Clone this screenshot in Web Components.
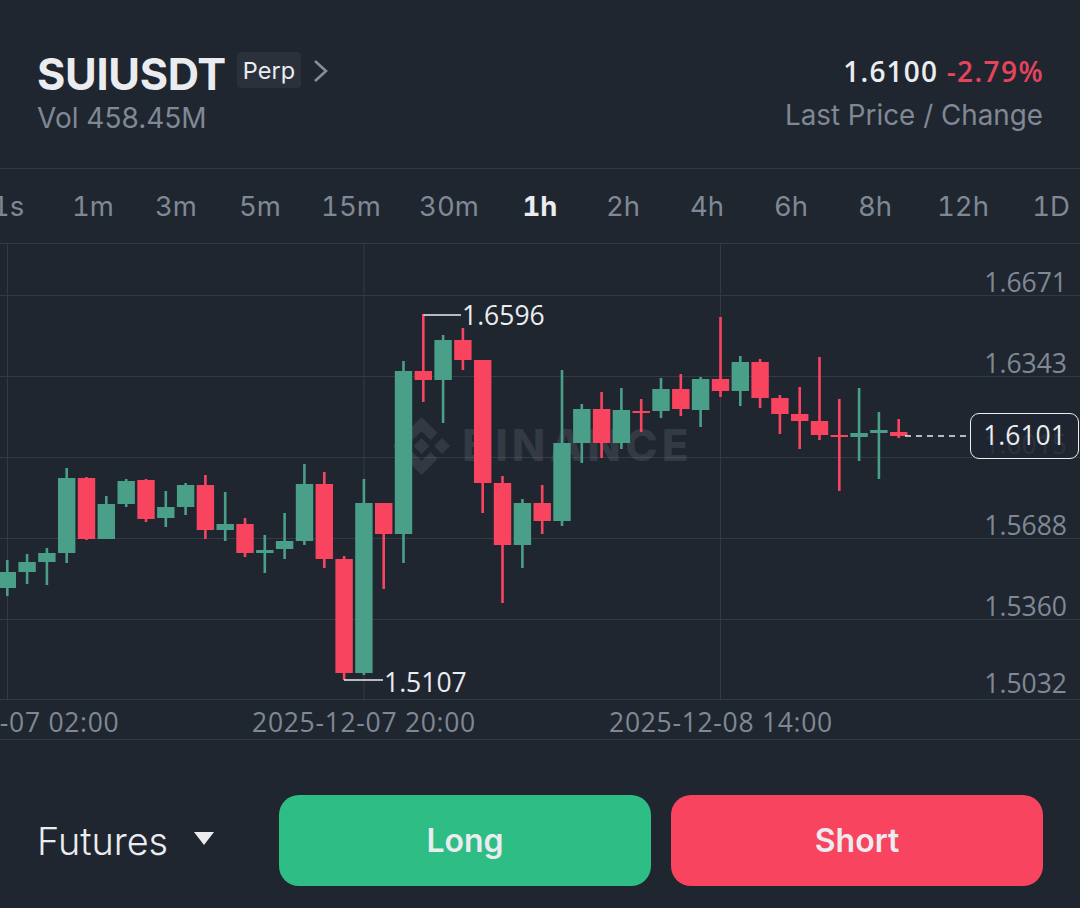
<!DOCTYPE html>
<html>
<head>
<meta charset="utf-8">
<style>
  html, body { margin: 0; background: #1f2630; }
  body { width: 1080px; height: 908px; overflow: hidden; font-family: "Inter", "Liberation Sans", sans-serif; }
</style>
</head>
<body>
<trade-screen>
  <trade-header symbol="SUIUSDT" tag="Perp" vol="Vol 458.45M" price="1.6100" change="-2.79%" caption="Last Price / Change"></trade-header>
  <interval-bar active="1h" items="1s:86,1m:84,3m:82,5m:86,15m:96,30m:100,1h:82,2h:84,4h:84,6h:84,8h:84,12h:92,1D:84"></interval-bar>
  <price-chart></price-chart>
  <action-bar>
    <trade-button kind="long">Long</trade-button>
    <trade-button kind="short">Short</trade-button>
  </action-bar>
</trade-screen>

<script>
class TradeScreen extends HTMLElement {
  constructor() {
    super();
    this.attachShadow({ mode: "open" });
    this.shadowRoot.innerHTML = `
      <style>
        :host { display: flex; flex-direction: column; width: 1080px; height: 908px; background: #1f2630; overflow: hidden; }
      </style>
      <slot></slot>
    `;
  }
}

class TradeHeader extends HTMLElement {
  connectedCallback() {
    const a = (n) => this.getAttribute(n);
    this.attachShadow({ mode: "open" });
    this.shadowRoot.innerHTML = `
      <style>
        :host { display: flex; justify-content: space-between; box-sizing: border-box; height: 169px; padding: 52px 37px 0 37px; border-bottom: 1px solid #343b46; }
        .title { display: flex; align-items: flex-start; }
        .symbol { font-size: 43.3px; font-weight: 700; line-height: 44px; letter-spacing: -0.3px; color: #eaecef; }
        .tag { margin-left: 11px; width: 64px; height: 36px; line-height: 37px; text-align: center; background: #2a313c; border-radius: 4px; font-size: 23.5px; color: #eaecef; }
        svg { margin: 8px 0 0 12px; }
        .vol { margin-top: 6px; font-size: 28px; line-height: 32px; color: #7f8894; }
        .right { text-align: right; }
        .quote { font-family: "Open Sans", sans-serif; font-size: 28px; line-height: 38px; font-weight: 600; letter-spacing: 1.2px; color: #eaecef; }
        .quote span { letter-spacing: 1.4px; margin-right: -1px; color: #e6445d; }
        .caption { margin-top: 9px; font-size: 27.8px; line-height: 32px; color: #7f8894; }
      </style>
      <div>
        <div class="title">
          <div class="symbol">${a("symbol")}</div>
          <div class="tag">${a("tag")}</div>
          <svg width="16" height="22" viewBox="0 0 16 22" fill="none" stroke="#848e9c" stroke-width="2.6"><path d="M2 1l11 10L2 21"/></svg>
        </div>
        <div class="vol">${a("vol")}</div>
      </div>
      <div class="right">
        <div class="quote">${a("price")} <span>${a("change")}</span></div>
        <div class="caption">${a("caption")}</div>
      </div>
    `;
  }
}

class IntervalBar extends HTMLElement {
  connectedCallback() {
    const active = this.getAttribute("active");
    const items = this.getAttribute("items").split(",").map((s) => s.split(":"));
    this.attachShadow({ mode: "open" });
    this.shadowRoot.innerHTML = `
      <style>
        :host { display: flex; align-items: center; box-sizing: border-box; height: 75px; margin-left: -35px; width: 1115px; border-bottom: 1px solid #343b46; font-size: 27.5px; font-variant-numeric: tabular-nums; color: #7f8894; white-space: nowrap; }
        span { flex: none; text-align: center; }
        .on { color: #eaecef; font-weight: 700; }
      </style>
      ${items.map(([t, w]) => `<span class="${t === active ? "on" : ""}" style="width:${w}px">${t}</span>`).join("")}
    `;
  }
}

// [colour, wickTop, bodyTop, bodyBottom, wickBottom] in page pixels
const CANDLES = [
  ["g",560,572,588,596],["g",554,562,572,584],["g",548,553,562,585],["g",468,478,553,563],
  ["r",477,478,539,540],["g",496,504,539,539],["g",479,481,504,507],["r",479,480,519,522],
  ["g",491,507,518,527],["g",483,485,507,515],["r",475,485,530,539],["g",492,524,530,541],
  ["r",518,524,553,557],["g",535,550,553,573],["g",513,541,549,559],["g",464,484,541,545],
  ["r",472,484,559,568],["r",556,559,673,680],["g",479,503,673,675],["r",503,503,534,589],
  ["g",361,371,534,563],["r",314,371,380,402],["g",335,340,380,423],["r",328,340,360,370],
  ["r",360,360,483,513],["r",476,483,545,603],["g",499,503,545,568],["r",485,503,521,534],
  ["g",370,443,521,526],["g",404,409,443,463],["r",392,409,443,458],["g",388,410,443,449],
  ["r",399,411,413,432],["g",378,389,411,418],["r",374,389,409,416],["g",377,379,410,427],
  ["r",317,379,391,397],["g",356,362,391,406],["r",359,362,398,408],["r",395,398,414,434],
  ["r",387,414,421,449],["r",357,421,435,440],["r",399,435,437,491],["g",388,433,437,461],
  ["g",412,430,433,479],["r",419,432,436,438],
];

class PriceChart extends HTMLElement {
  connectedCallback() {
    const colors = { g: "#4a9f88", r: "#f9445f" };
    const candles = CANDLES.map(([c, wt, bt, bb, wb], i) => {
      const x = 7.3 + 19.81 * i;
      return `<rect x="${(x - 1.3).toFixed(1)}" y="${wt}" width="2.6" height="${wb - wt}" fill="${colors[c]}"/>` +
        `<rect x="${(x - 8.7).toFixed(1)}" y="${bt}" width="17.4" height="${bb - bt}" fill="${colors[c]}"/>`;
    }).join("");
    const hLines = [295, 376, 457, 538, 619, 699].map((y) => `<path d="M0 ${y + .5}H1080"/>`).join("");
    const vLines = [7.5, 364, 720.5].map((x) => `<path d="M${x} 244V699"/>`).join("");
    const axis = [["1.6671", 282], ["1.6343", 363], ["1.6015", 444], ["1.5688", 525], ["1.5360", 606], ["1.5032", 683]];
    const times = [["2025-12-07 02:00", 7.5], ["2025-12-07 20:00", 364], ["2025-12-08 14:00", 721]];
    this.attachShadow({ mode: "open" });
    this.shadowRoot.innerHTML = `
      <style>
        :host { display: block; position: relative; flex: none; box-sizing: border-box; height: 496px; width: 1080px; border-bottom: 1px solid #343b46; font-family: "Open Sans", sans-serif; font-size: 26.5px; overflow: hidden; }
        svg { position: absolute; left: 0; top: 0; }
        .grid { stroke: #333a45; stroke-width: 1; fill: none; }
        .mark { position: absolute; line-height: 30px; transform: translateY(-50%); }
        .axis { right: 13px; color: #7f8894; }
        .time { top: 478px; line-height: 30px; transform: translate(-50%, -50%); position: absolute; color: #7f8894; white-space: nowrap; letter-spacing: .7px; }
        .peak { color: #eaecef; }
        .last { position: absolute; left: 970px; top: 169px; width: 109px; height: 46px; box-sizing: border-box; border: 1.5px solid #eaecef; border-radius: 9px; background: rgba(31,38,48,.88); color: #eaecef; line-height: 43px; text-align: center; }
        .wm { position: absolute; left: 462px; top: 201px; transform: translateY(-50%); font-family: "Inter", sans-serif; line-height: 44px; font-size: 44px; font-weight: 800; letter-spacing: 4px; color: rgba(255,255,255,.09); }
        .candles { position: absolute; left: 0; top: 0; }
      </style>
      <svg width="1080" height="495" viewBox="0 244 1080 495">
        <g class="grid">${hLines}${vLines}</g>
        <g fill="#ffffff" fill-opacity=".09">
          <path d="M421.5 417l16 16-7 7-9-9-9 9-7-7z"/>
          <path d="M421.5 475l-16-16 7-7 9 9 9-9 7 7z"/>
          <path d="M421.5 438l8 8-8 8-8-8z"/>
          <path d="M442 438l8 8-8 8-8-8z"/>
          <path d="M401 438l8 8-8 8-8-8z"/>
        </g>
      </svg>
      <div class="wm">BINANCE</div>
      <svg class="candles" width="1080" height="495" viewBox="0 244 1080 495">
        ${candles}
        <path d="M423.5 315H461M344 680H383" stroke="#eaecef" stroke-width="1.6" fill="none"/>
        <path d="M905 436H970" stroke="#eaecef" stroke-width="1.4" stroke-dasharray="6 5" fill="none"/>
      </svg>
      ${axis.map(([t, y]) => `<div class="mark axis" style="top:${y - 244}px">${t}</div>`).join("")}
      ${times.map(([t, x]) => `<div class="time" style="left:${x}px">${t}</div>`).join("")}
      <div class="mark peak" style="left:462px;top:71px">1.6596</div>
      <div class="mark peak" style="left:384px;top:438px">1.5107</div>
      <div class="last">1.6101</div>
    `;
  }
}

class ActionBar extends HTMLElement {
  constructor() {
    super();
    this.attachShadow({ mode: "open" });
    this.shadowRoot.innerHTML = `
      <style>
        :host { display: flex; align-items: flex-start; box-sizing: border-box; flex: 1; padding: 55px 37px 0 37px; gap: 20px; }
        .market { display: flex; align-items: center; width: 222px; height: 91px; color: #eaecef; font-size: 37.8px; font-weight: 300; }
        svg { margin: -4px 0 0 25px; }
      </style>
      <div class="market">Futures<svg width="22" height="15" viewBox="0 0 22 15"><path d="M1 1h20L11 14z" fill="#eaecef"/></svg></div>
      <slot></slot>
    `;
  }
}

class TradeButton extends HTMLElement {
  constructor() {
    super();
    this.attachShadow({ mode: "open" });
    this.shadowRoot.innerHTML = `
      <style>
        :host { display: flex; align-items: center; justify-content: center; width: 372px; height: 91px; border-radius: 20px; color: #eaecef; font-size: 32px; font-weight: 600; }
        :host([kind="long"]) { background: #2ebd85; }
        :host([kind="short"]) { background: #f9445f; }
      </style>
      <slot></slot>
    `;
  }
}

customElements.define("trade-screen", TradeScreen);
customElements.define("trade-header", TradeHeader);
customElements.define("interval-bar", IntervalBar);
customElements.define("price-chart", PriceChart);
customElements.define("action-bar", ActionBar);
customElements.define("trade-button", TradeButton);
</script>
</body>
</html>
